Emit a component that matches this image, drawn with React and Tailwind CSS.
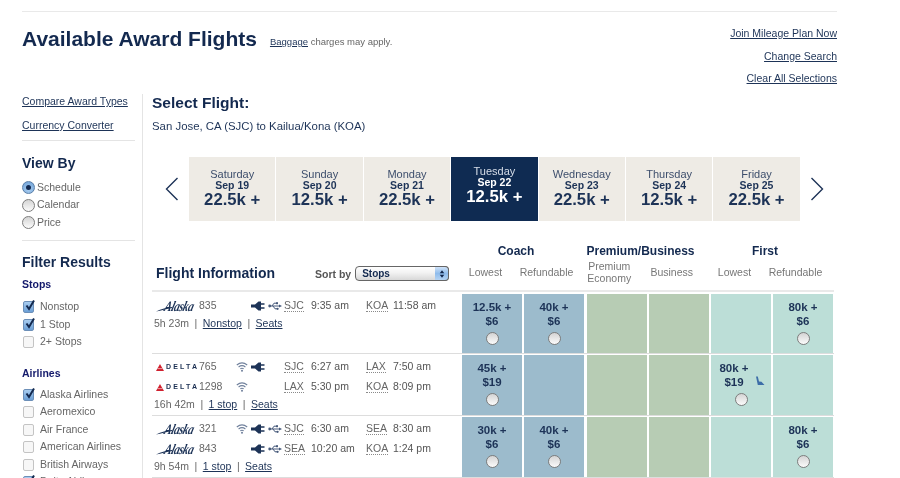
import React from "react";

const sans = "font-['Liberation_Sans',Arial,sans-serif]";

function Radio({ on }) {
  return (
    <span className={`inline-flex w-[13px] h-[13px] shrink-0 rounded-full items-center justify-center border ${on ? "border-[#5a7fa8] bg-[radial-gradient(circle_at_50%_70%,#a9cdf0,#6b9fd6)]" : "border-[#7d7d7d] bg-[linear-gradient(#d4d4d4,#fbfbfb)]"}`}>
      {on && <span className="w-[5px] h-[5px] rounded-full bg-[#13294f]" />}
    </span>
  );
}

function Check({ on }) {
  return (
    <span className={`relative inline-block w-[11px] h-[12px] ml-[1px] shrink-0 rounded-[2px] border ${on ? "border-[#6c8fb8] bg-[linear-gradient(#a9cdf0,#6b9fd6)]" : "border-[#c4c4c4] bg-[#f7f7f7]"}`}>
      {on && (
        <svg viewBox="0 0 12 12" className="absolute left-[0px] top-[-3px] w-[12px] h-[12px]">
          <path d="M2.5 6.5 L5 10 L10 1.5" fill="none" stroke="#13294f" strokeWidth="2" />
        </svg>
      )}
    </span>
  );
}

function Alaska() {
  return (
    <span className="relative inline-block w-[39px] h-[14px] shrink-0 overflow-visible">
      <svg viewBox="0 0 39 14" className="absolute left-0 top-0 w-[39px] h-[14px]">
        <path d="M0 12.5 C5 10 11 8.5 16 8 L16 9 C11 10 5 11.5 0 12.5 Z" fill="#1d3357" />
      </svg>
      <span className="absolute left-[9px] top-[-1px] font-['Liberation_Serif',serif] italic font-bold text-[11px] leading-[16px] tracking-[-0.4px] text-[#1d3357] -skew-x-[20deg] scale-y-[1.3]">Alaska</span>
    </span>
  );
}

function Delta() {
  return (
    <span className="inline-flex items-center w-[43px] h-[14px] shrink-0">
      <svg viewBox="0 0 8 7" className="w-[8px] h-[7px] mr-[2px] shrink-0">
        <path d="M4 0 L8 7 L0 7 Z" fill="#d0202e" />
        <path d="M1.5 4.6 L6.5 4.6" stroke="#fff" strokeWidth="0.6" />
      </svg>
      <span className="font-bold text-[7px] tracking-[2.2px] text-[#1b2f52]">DELTA</span>
    </span>
  );
}

function Wifi() {
  return (
    <svg viewBox="0 0 12 10" className="w-[12px] h-[10px]">
      <g fill="none" stroke="#70809c" strokeWidth="1.1">
        <path d="M0.8 3 C4 0.3 8 0.3 11.2 3" />
        <path d="M2.6 5 C4.8 3.3 7.2 3.3 9.4 5" />
        <path d="M4.3 6.9 C5.4 6.1 6.6 6.1 7.7 6.9" />
      </g>
      <circle cx="6" cy="8.7" r="1" fill="#70809c" />
    </svg>
  );
}

function Plug() {
  return (
    <svg viewBox="0 0 14 10" className="w-[14px] h-[10px]">
      <path d="M0 3.6 H4 L7.5 0.6 H10 V9.4 H7.5 L4 6.4 H0 Z" fill="#1d3357" />
      <path d="M10 3 H13.5 M10 7 H13.5" stroke="#1d3357" strokeWidth="1.5" />
    </svg>
  );
}

function Usb() {
  return (
    <svg viewBox="0 0 14 10" className="w-[14px] h-[10px]">
      <g fill="none" stroke="#46597a" strokeWidth="1">
        <path d="M1.5 5 H11" />
        <path d="M4 5 L6 2.2 H8" />
        <path d="M5 5 L7 7.8 H9" />
      </g>
      <circle cx="1.7" cy="5" r="1.4" fill="#46597a" />
      <path d="M11 3.4 L14 5 L11 6.6 Z" fill="#46597a" />
      <rect x="8" y="1.2" width="2" height="2" fill="#46597a" />
      <circle cx="9.6" cy="7.8" r="1.1" fill="#46597a" />
    </svg>
  );
}

const U = ({ children, className = "" }) => (
  <a className={`underline text-[#1d3357] underline-offset-[1px] ${className}`}>{children}</a>
);

function Code({ children }) {
  return <span className="border-b border-dotted border-[#8a8a8a] leading-[12px] text-[#666]">{children}</span>;
}

function Leg({ airline, num, icons, from, dep, to, arr }) {
  return (
    <div className="flex items-center h-[20px] text-[10.5px] text-[#666] whitespace-nowrap">
      <span className="w-[43px] shrink-0 flex">{airline === "AS" ? <Alaska /> : <Delta />}</span>
      <span className="w-[35px] shrink-0">{num}</span>
      <span className="w-[50px] shrink-0 flex items-center justify-end gap-[3px] pr-[2px]">{icons}</span>
      <span className="w-[27px] shrink-0"><Code>{from}</Code></span>
      <span className="w-[55px] shrink-0 text-[#555]">{dep}</span>
      <span className="w-[27px] shrink-0"><Code>{to}</Code></span>
      <span className="text-[#555]">{arr}</span>
    </div>
  );
}

function Meta({ time, stop }) {
  return (
    <div className="flex items-center h-[16px] -ml-[2px] text-[10.5px] text-[#666] whitespace-nowrap">
      <span>{time}</span>
      <span className="mx-[5.5px]">|</span>
      <U>{stop}</U>
      <span className="mx-[5.5px]">|</span>
      <U>Seats</U>
    </div>
  );
}

function Fare({ bg, lines, seat, h = "h-[59px]" }) {
  return (
    <div className={`${bg} ${h} w-[60px] flex flex-col items-center pt-[6px] text-[11.5px] leading-[14px] font-bold text-[#1d3357]`}>
      {lines && (
        <>
          <div className={seat ? "-ml-[14px]" : ""}>{lines[0]}</div>
          <div className={`relative ${seat ? "-ml-[14px]" : ""}`}>
            {lines[1]}
            {seat && (
              <svg viewBox="0 0 10 10" className="absolute left-[31px] top-[1px] w-[10px] h-[10px]">
                <path d="M1 0.5 L2.8 0.5 L4 5.5 L6.5 5.8 L9.5 9 L2.8 9 Z" fill="#3d6ea8" />
              </svg>
            )}
          </div>
          <div className="mt-[4px] flex"><Radio /></div>
        </>
      )}
    </div>
  );
}

function Cells({ data, h }) {
  const bgs = ["bg-[#9cbbcc]", "bg-[#9cbbcc]", "bg-[#b7ccb4]", "bg-[#b7ccb4]", "bg-[#bcded7]", "bg-[#bcded7]"];
  return (
    <div className="flex ml-auto">
      {bgs.map((bg, i) => (
        <div key={i} className={`${i === 0 ? "" : i === 2 ? "ml-[3px]" : "ml-[2px]"}`}>
          <Fare bg={bg} h={h} lines={data[i]} seat={data[i] && data[i][2]} />
        </div>
      ))}
    </div>
  );
}

function Tile({ day, date, price, active }) {
  return (
    <div className={`w-[86.4px] h-[64px] text-center flex flex-col items-center ${active ? "bg-[#0f2b52] text-white pt-[9px]" : "bg-[#eeebe5] text-[#1d3357] pt-[12px]"}`}>
      <div className={`text-[11px] leading-[11px] ${active ? "text-[#d6dde8]" : "text-[#3d4e6c]"}`}>{day}</div>
      <div className="text-[10.5px] leading-[11px] font-bold">{date}</div>
      <div className="text-[16.7px] leading-[18px] font-bold">{price}</div>
    </div>
  );
}

function SideOption({ children, label, radio }) {
  return (
    <div className="flex items-center h-[17.5px] text-[10.5px] text-[#666]">
      <span className={`${radio ? "w-[15px]" : "w-[18px]"} flex shrink-0`}>{children}</span>
      {label}
    </div>
  );
}

export default function App() {
  const days = [
    ["Saturday", "Sep 19", "22.5k +"],
    ["Sunday", "Sep 20", "12.5k +"],
    ["Monday", "Sep 21", "22.5k +"],
    ["Tuesday", "Sep 22", "12.5k +", true],
    ["Wednesday", "Sep 23", "22.5k +"],
    ["Thursday", "Sep 24", "12.5k +"],
    ["Friday", "Sep 25", "22.5k +"],
  ];
  return (
    <div className={`${sans} w-[900px] h-[478px] overflow-hidden bg-white text-[#1d3357] blur-[0.35px]`}>
      <div className="w-[815px] ml-[22px] pt-[11px]">
        <div className="h-[1px] bg-[#e9e9e9]" />
        <div className="flex h-[82px]">
          <div className="flex items-start pt-[13px]">
            <h1 className="text-[21px] leading-[28px] font-bold text-[#13294f]">Available Award Flights</h1>
            <div className="ml-[13px] mt-[11px] text-[9.5px] leading-[12px] text-[#666]"><U>Baggage</U> charges may apply.</div>
          </div>
          <div className="ml-auto flex flex-col items-end pt-[14px] gap-[7.5px] text-[10.5px] leading-[15px]">
            <U>Join Mileage Plan Now</U>
            <U>Change Search</U>
            <U>Clear All Selections</U>
          </div>
        </div>
        <div className="flex">
          <aside className="w-[121px] shrink-0 border-r border-[#e4e4e4] h-[400px] pr-[7px]">
            <div className="w-[113px]">
              <div className="text-[10.5px] leading-[14px]"><U>Compare Award Types</U></div>
              <div className="text-[10.5px] leading-[14px] mt-[10px]"><U>Currency Converter</U></div>
              <div className="h-[1px] bg-[#e4e4e4] mt-[8px]" />
              <div className="text-[14px] leading-[18px] font-bold text-[#13294f] mt-[13px]">View By</div>
              <div className="mt-[7px]">
                <SideOption radio label="Schedule"><Radio on /></SideOption>
                <SideOption radio label="Calendar"><Radio /></SideOption>
                <SideOption radio label="Price"><Radio /></SideOption>
              </div>
              <div className="h-[1px] bg-[#e4e4e4] mt-[8px]" />
              <div className="text-[14px] leading-[18px] font-bold text-[#13294f] mt-[12px]">Filter Results</div>
              <div className="text-[10.5px] leading-[14px] font-bold text-[#13196b] mt-[6px]">Stops</div>
              <div className="mt-[8px]">
                <SideOption label="Nonstop"><Check on /></SideOption>
                <SideOption label="1 Stop"><Check on /></SideOption>
                <SideOption label="2+ Stops"><Check /></SideOption>
              </div>
              <div className="text-[10.5px] leading-[14px] font-bold text-[#13196b] mt-[15px]">Airlines</div>
              <div className="mt-[6px]">
                <SideOption label="Alaska Airlines"><Check on /></SideOption>
                <SideOption label="Aeromexico"><Check /></SideOption>
                <SideOption label="Air France"><Check /></SideOption>
                <SideOption label="American Airlines"><Check /></SideOption>
                <SideOption label="British Airways"><Check /></SideOption>
                <SideOption label="Delta Airlines"><Check on /></SideOption>
              </div>
            </div>
          </aside>
          <main className="flex-1 pl-[9px] min-w-0">
            <div className="text-[15.5px] leading-[18px] font-bold text-[#13294f]">Select Flight:</div>
            <div className="text-[11.4px] leading-[14px] mt-[7px]">San Jose, CA (SJC) to Kailua/Kona (KOA)</div>
            <div className="flex items-center mt-[24px] h-[64px]">
              <svg viewBox="0 0 14 24" className="w-[14px] h-[24px] ml-[13px]">
                <path d="M12.5 1 L1.5 12 L12.5 23" fill="none" stroke="#1d3357" strokeWidth="1.4" />
              </svg>
              <div className="flex gap-[1px] ml-[10px]">
                {days.map((d) => <Tile key={d[0]} day={d[0]} date={d[1]} price={d[2]} active={d[3]} />)}
              </div>
              <svg viewBox="0 0 14 24" className="w-[14px] h-[24px] ml-[10px]">
                <path d="M1.5 1 L12.5 12 L1.5 23" fill="none" stroke="#1d3357" strokeWidth="1.4" />
              </svg>
            </div>
            <div className="flex mt-[22px] h-[47px]">
              <div className="w-[303px] shrink-0 flex items-end pb-[8px] pl-[4px]">
                <span className="text-[14px] leading-[18px] font-bold text-[#13294f] whitespace-nowrap">Flight Information</span>
                <span className="ml-[40px] text-[10.5px] leading-[16px] font-bold text-[#555] whitespace-nowrap">Sort by</span>
                <span className="ml-[4px] mb-[1px] relative w-[94px] h-[15px] rounded-[4px] border border-[#666] bg-[linear-gradient(#fff,#f2f2f2_45%,#d8d8d8)] text-[10px] leading-[13px] pl-[6px] font-bold text-[#13294f]">
                  Stops
                  <span className="absolute right-[-1px] top-[-1px] w-[14px] h-[15px] rounded-r-[4px] border border-[#666] border-l-0 bg-[linear-gradient(#cfe2f8,#8fbcec_50%,#b5d3f3)] flex items-center justify-center">
                    <svg viewBox="0 0 8 10" className="w-[6px] h-[8px]"><path d="M4 0 L7 4 H1 Z M4 10 L1 6 H7 Z" fill="#12264a" /></svg>
                  </span>
                </span>
              </div>
              <div className="flex-1 flex text-center whitespace-nowrap">
                {[
                  ["Coach", ["Lowest", "Refundable"], "w-[122px]"],
                  ["Premium/Business", [["Premium", "Economy"], "Business"], "w-[125px] ml-[1px]"],
                  ["First", ["Lowest", "Refundable"], "w-[122px] ml-[1px]"],
                ].map(([t, subs, w]) => (
                  <div key={t} className={`${w} flex flex-col`}>
                    <div className="text-[12px] leading-[14px] font-bold text-[#13294f] mt-[1px]">{t}</div>
                    <div className="flex h-[26px] items-center text-[10.5px] leading-[12px] text-[#777] mt-[1px]">
                      {subs.map((s, i) => (
                        <div key={i} className="w-1/2">{Array.isArray(s) ? <>{s[0]}<br />{s[1]}</> : s}</div>
                      ))}
                    </div>
                  </div>
                ))}
              </div>
            </div>
            <div className="h-[2px] bg-[#e9e9e9] w-[682px]" />
            <div className="w-[682px]">
              <div className="flex h-[62px] border-b border-[#ddd] relative">
                <div className="w-[308px] shrink-0 pl-[4px] pt-[4px]">
                  <Leg airline="AS" num="835" icons={<><Plug /><Usb /></>} from="SJC" dep="9:35 am" to="KOA" arr="11:58 am" />
                  <Meta time="5h 23m" stop="Nonstop" />
                </div>
                <div className="absolute right-[1px] top-[2px]"><Cells h="h-[59px]" data={[["12.5k +", "$6"], ["40k +", "$6"], null, null, null, ["80k +", "$6"]]} /></div>
              </div>
              <div className="flex h-[62px] border-b border-[#ddd] relative">
                <div className="w-[308px] shrink-0 pl-[4px] pt-[3px]">
                  <Leg airline="DL" num="765" icons={<><Wifi /><Plug /><span className="w-[14px]" /></>} from="SJC" dep="6:27 am" to="LAX" arr="7:50 am" />
                  <Leg airline="DL" num="1298" icons={<><Wifi /><span className="w-[31px]" /></>} from="LAX" dep="5:30 pm" to="KOA" arr="8:09 pm" />
                  <Meta time="16h 42m" stop="1 stop" />
                </div>
                <div className="absolute right-[1px] top-[1px]"><Cells h="h-[60px]" data={[["45k +", "$19"], null, null, null, ["80k +", "$19", true], null]} /></div>
              </div>
              <div className="flex h-[62px] border-b border-[#ddd] relative">
                <div className="w-[308px] shrink-0 pl-[4px] pt-[3px]">
                  <Leg airline="AS" num="321" icons={<><Wifi /><Plug /><Usb /></>} from="SJC" dep="6:30 am" to="SEA" arr="8:30 am" />
                  <Leg airline="AS" num="843" icons={<><Plug /><Usb /></>} from="SEA" dep="10:20 am" to="KOA" arr="1:24 pm" />
                  <Meta time="9h 54m" stop="1 stop" />
                </div>
                <div className="absolute right-[1px] top-[1px]"><Cells h="h-[60px]" data={[["30k +", "$6"], ["40k +", "$6"], null, null, null, ["80k +", "$6"]]} /></div>
              </div>
            </div>
          </main>
        </div>
      </div>
    </div>
  );
}
